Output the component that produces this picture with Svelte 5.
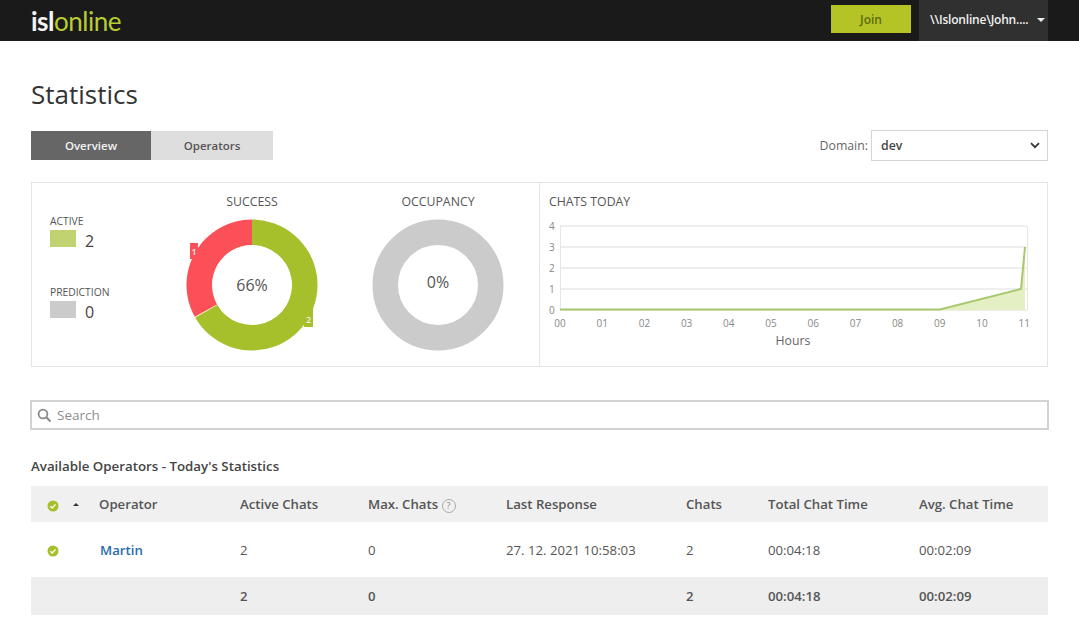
<script>
	const hours = ['00', '01', '02', '03', '04', '05', '06', '07', '08', '09', '10', '11'];
	const levels = [4, 3, 2, 1, 0];

	function arc(cx, cy, r0, r1, from, to) {
		const pt = (r, a) => {
			const rad = ((a - 90) * Math.PI) / 180;
			return `${(cx + r * Math.cos(rad)).toFixed(2)} ${(cy + r * Math.sin(rad)).toFixed(2)}`;
		};
		const large = to - from > 180 ? 1 : 0;
		return `M${pt(r1, from)} A${r1} ${r1} 0 ${large} 1 ${pt(r1, to)} L${pt(r0, to)} A${r0} ${r0} 0 ${large} 0 ${pt(r0, from)} Z`;
	}

	const columns = [
		{ label: 'Active Chats', key: 'active' },
		{ label: 'Max. Chats', key: 'max', help: true },
		{ label: 'Last Response', key: 'last' },
		{ label: 'Chats', key: 'chats' },
		{ label: 'Total Chat Time', key: 'total' },
		{ label: 'Avg. Chat Time', key: 'avg' }
	];
	const row = { active: '2', max: '0', last: '27. 12. 2021 10:58:03', chats: '2', total: '00:04:18', avg: '00:02:09' };
	const totals = { active: '2', max: '0', last: '', chats: '2', total: '00:04:18', avg: '00:02:09' };
</script>

<header class="topbar">
	<div class="logo"><span class="logo__isl">isl</span><span class="logo__online">online</span></div>
	<button class="join" type="button">Join</button>
	<div class="user">
		<span>\\Islonline\John....</span>
		<i class="user__caret"></i>
	</div>
</header>

<main class="page">
	<h1>Statistics</h1>

	<div class="toolbar">
		<div class="tabs">
			<button class="tab is-active" type="button">Overview</button>
			<button class="tab" type="button">Operators</button>
		</div>
		<div class="domain">
			<span>Domain:</span>
			<div class="domain__select">
				<span>dev</span>
				<svg width="10" height="7" viewBox="0 0 10 7"><path d="M1 1.2 5 5.2 9 1.2" fill="none" stroke="#333" stroke-width="1.7" /></svg>
			</div>
		</div>
	</div>

	<section class="panel">
		<div class="panel__left">
			<div class="legend">
				<div class="legend__item">
					<span class="legend__label">ACTIVE</span>
					<div class="legend__value"><i class="swatch swatch--active"></i><span>2</span></div>
				</div>
				<div class="legend__item">
					<span class="legend__label">PREDICTION</span>
					<div class="legend__value"><i class="swatch swatch--prediction"></i><span>0</span></div>
				</div>
			</div>

			<div class="donut donut--success">
				<div class="chart-title">SUCCESS</div>
				<svg width="140" height="140" viewBox="0 0 140 140">
					<path d={arc(70, 70, 40, 65.5, 0, 240.5)} fill="#a6c02c" />
					<path d={arc(70, 70, 40, 65.5, 240.5, 360)} fill="#fb5057" />
					<path d={arc(70, 70, 39.5, 66, 240, 241)} fill="#f2f0c8" />
					<rect x="8" y="28" width="8" height="16" fill="#fb5057" />
					<text x="12" y="40" class="slice-label">1</text>
					<rect x="122" y="93" width="9" height="19" fill="#a6c02c" />
					<text x="126.5" y="108" class="slice-label">2</text>
					<text x="70" y="76" class="donut__pct">66%</text>
				</svg>
			</div>

			<div class="donut donut--occupancy">
				<div class="chart-title">OCCUPANCY</div>
				<svg width="140" height="140" viewBox="0 0 140 140">
					<circle cx="70" cy="70" r="52.75" fill="none" stroke="#cbcbcb" stroke-width="25.5" />
					<text x="70" y="73" class="donut__pct">0%</text>
				</svg>
			</div>
		</div>

		<div class="panel__right">
			<div class="chart-title">CHATS TODAY</div>
			<svg class="line-chart" width="500" height="135" viewBox="0 0 500 135">
				{#each levels as n, i}
					<line x1="15" x2="482" y1={6 + i * 21} y2={6 + i * 21} stroke="#dcdcdc" />
					<text x="4" y={10 + i * 21} class="tick" text-anchor="start">{n}</text>
				{/each}
				<line x1="15.5" x2="15.5" y1="6" y2="90" stroke="#e6e6e6" />
				<line x1="482.5" x2="482.5" y1="6" y2="90" stroke="#e6e6e6" />
				<path d="M15 90H395L476 69 480 27V90Z" fill="#e4efc4" />
				<path d="M15 89.5H395L476 69 480 27" fill="none" stroke="#a9c86e" stroke-width="2" />
				{#each hours as h, i}
					<text x={15 + i * 42.2} y="107" class="tick" text-anchor="middle">{h}</text>
				{/each}
				<text x="248" y="125" class="axis-title">Hours</text>
			</svg>
		</div>
	</section>

	<div class="search">
		<svg width="15" height="15" viewBox="0 0 15 15"><circle cx="6" cy="6" r="4.4" fill="none" stroke="#8a8a8a" stroke-width="1.8" /><path d="M9.3 9.3 13.5 13.5" stroke="#8a8a8a" stroke-width="2" /></svg>
		<span>Search</span>
	</div>

	<h2>Available Operators - Today's Statistics</h2>

	<table>
		<colgroup>
			<col style="width: 68px" />
			<col style="width: 141px" />
			<col style="width: 128px" />
			<col style="width: 138px" />
			<col style="width: 180px" />
			<col style="width: 82px" />
			<col style="width: 151px" />
			<col />
		</colgroup>
		<thead>
			<tr>
				<th class="status">
					<svg class="check" width="12" height="12" viewBox="0 0 12 12"><circle cx="6" cy="6" r="5.5" fill="#a6c02c" /><path d="M3.4 6.2 5.2 8 8.6 4.4" fill="none" stroke="#fff" stroke-width="1.3" /></svg>
					<i class="sort"></i>
				</th>
				<th>Operator</th>
				{#each columns as col}
					<th>
						{col.label}
						{#if col.help}<span class="help">?</span>{/if}
					</th>
				{/each}
			</tr>
		</thead>
		<tbody>
			<tr class="row">
				<td class="status">
					<svg class="check" width="12" height="12" viewBox="0 0 12 12"><circle cx="6" cy="6" r="5.5" fill="#a6c02c" /><path d="M3.4 6.2 5.2 8 8.6 4.4" fill="none" stroke="#fff" stroke-width="1.3" /></svg>
				</td>
				<td><a href="#martin" class="name">Martin</a></td>
				{#each columns as col}
					<td>{row[col.key]}</td>
				{/each}
			</tr>
			<tr class="totals">
				<td></td>
				<td></td>
				{#each columns as col}
					<td>{totals[col.key]}</td>
				{/each}
			</tr>
		</tbody>
	</table>
</main>

<style>
	:global(body) {
		margin: 0;
		background: #fff;
		font-family: 'Open Sans', 'Liberation Sans', sans-serif;
		color: #4a4a4a;
	}

	.topbar {
		display: flex;
		align-items: center;
		height: 41px;
		padding: 0 31px;
		background: #1a1a1a;
	}

	.logo {
		flex: 1;
		font-size: 26px;
		line-height: 40px;
		letter-spacing: -0.5px;
	}

	.logo__isl {
		color: #f4f4f4;
		font-family: Lato, sans-serif;
		font-weight: 700;
	}

	.logo__online {
		color: #b9cc34;
		font-family: Lato, sans-serif;
		font-weight: 400;
	}

	.join {
		width: 80px;
		height: 28px;
		margin: -3px 8px 0 0;
		border: 0;
		background: #b4c424;
		color: #5f6a12;
		font: 600 12px 'Open Sans', sans-serif;
	}

	.user {
		display: flex;
		align-items: center;
		justify-content: space-between;
		box-sizing: border-box;
		width: 129px;
		height: 41px;
		padding: 0 3px 2px 11px;
		background: #303030;
		color: #f0f0f0;
		font-size: 12px;
		font-weight: 600;
		letter-spacing: -0.2px;
	}

	.user__caret {
		width: 0;
		height: 0;
		border: 4px solid transparent;
		border-top: 4px solid #eee;
		border-bottom: 0;
	}

	.page {
		padding: 0 31px;
	}

	h1 {
		margin: 0;
		padding-top: 35px;
		font-size: 26px;
		line-height: 36px;
		font-weight: 500;
		color: #333;
	}

	.toolbar {
		display: flex;
		align-items: center;
		justify-content: space-between;
		margin-top: 17px;
		height: 32px;
	}

	.tabs {
		display: flex;
	}

	.tab {
		width: 122px;
		height: 29px;
		border: 0;
		padding: 0;
		background: #dedede;
		color: #555;
		font: 600 11.5px 'Open Sans', sans-serif;
	}

	.tab.is-active {
		width: 120px;
		background: #666;
		color: #f2f2f2;
	}

	.domain {
		display: flex;
		align-items: center;
		gap: 3px;
		font-size: 12.3px;
		color: #666;
	}

	.domain__select {
		display: flex;
		align-items: center;
		justify-content: space-between;
		box-sizing: border-box;
		width: 177px;
		height: 31px;
		padding: 0 7px 0 9px;
		border: 1px solid #d4d4d4;
		color: #444;
		font-weight: 600;
	}

	.panel {
		display: grid;
		grid-template-columns: 508px 1fr;
		box-sizing: border-box;
		height: 185px;
		margin-top: 21px;
		border: 1.5px solid #e4e4e4;
	}

	.panel__left {
		display: flex;
		border-right: 1.5px solid #e4e4e4;
		padding-left: 18px;
	}

	.legend {
		display: flex;
		flex-direction: column;
		gap: 36px;
		width: 132px;
		padding-top: 32px;
		flex: none;
	}

	.legend__label {
		display: block;
		font-size: 10.3px;
		line-height: 12px;
		color: #555;
	}

	.legend__value {
		display: flex;
		align-items: center;
		gap: 9px;
		font-size: 16px;
		line-height: 18px;
		color: #444;
	}

	.legend__value span {
		padding-top: 5px;
	}

	.swatch {
		width: 26px;
		height: 17px;
	}

	.swatch--active {
		background: #c1d370;
	}

	.swatch--prediction {
		background: #cbcbcb;
	}

	.donut {
		display: flex;
		flex-direction: column;
		align-items: center;
		width: 140px;
		flex: none;
	}

	.donut--occupancy {
		margin-left: 46px;
	}

	.donut svg {
		margin-top: 5px;
	}

	.chart-title {
		padding-top: 10px;
		font-size: 12.3px;
		line-height: 17px;
		color: #555;
	}

	.donut__pct {
		font-size: 16px;
		fill: #555;
		text-anchor: middle;
	}

	.slice-label {
		font-size: 9px;
		font-weight: 600;
		fill: #f5f0e0;
		text-anchor: middle;
	}

	.panel__right {
		padding-left: 9px;
	}

	.line-chart {
		display: block;
		margin: 10px 0 0 -4px;
	}

	.tick {
		font-size: 10px;
		fill: #888;
	}

	.axis-title {
		font-size: 12.3px;
		fill: #666;
		text-anchor: middle;
	}

	.search {
		display: flex;
		align-items: center;
		gap: 5px;
		box-sizing: border-box;
		height: 30px;
		margin: 33px -1px 0;
		padding: 0 5px;
		border: 2px solid #d2d2d2;
		color: #8e8e8e;
		font-size: 13.5px;
	}

	h2 {
		margin: 28px 0 0;
		font-size: 13.3px;
		line-height: 17px;
		font-weight: 600;
		color: #444;
	}

	table {
		width: 1017px;
		margin-top: 11px;
		border-collapse: collapse;
		table-layout: fixed;
		font-size: 13.2px;
		color: #555;
	}

	th {
		height: 36px;
		padding: 0;
		background: #f0f0f0;
		text-align: left;
		font-weight: 600;
		color: #555;
	}

	td {
		padding: 0;
	}

	.row td {
		height: 55px;
	}

	.totals td {
		height: 38px;
		background: #eeeeee;
		font-weight: 600;
	}

	.status {
		padding-left: 16px;
		white-space: nowrap;
	}

	.check {
		display: inline-block;
		vertical-align: middle;
		margin-top: 1px;
	}

	.sort {
		display: inline-block;
		vertical-align: middle;
		margin: -2px 0 0 11px;
		border: 3px solid transparent;
		border-bottom: 3px solid #333;
		border-top: 0;
	}

	.name {
		margin-left: 1px;
		color: #2a6cb0;
		font-weight: 600;
		text-decoration: none;
	}

	.help {
		display: inline-block;
		box-sizing: border-box;
		width: 14px;
		height: 14px;
		border: 1px solid #aaa;
		border-radius: 50%;
		font-size: 9px;
		line-height: 12px;
		text-align: center;
		font-weight: 400;
		color: #888;
		vertical-align: 0;
	}
</style>
